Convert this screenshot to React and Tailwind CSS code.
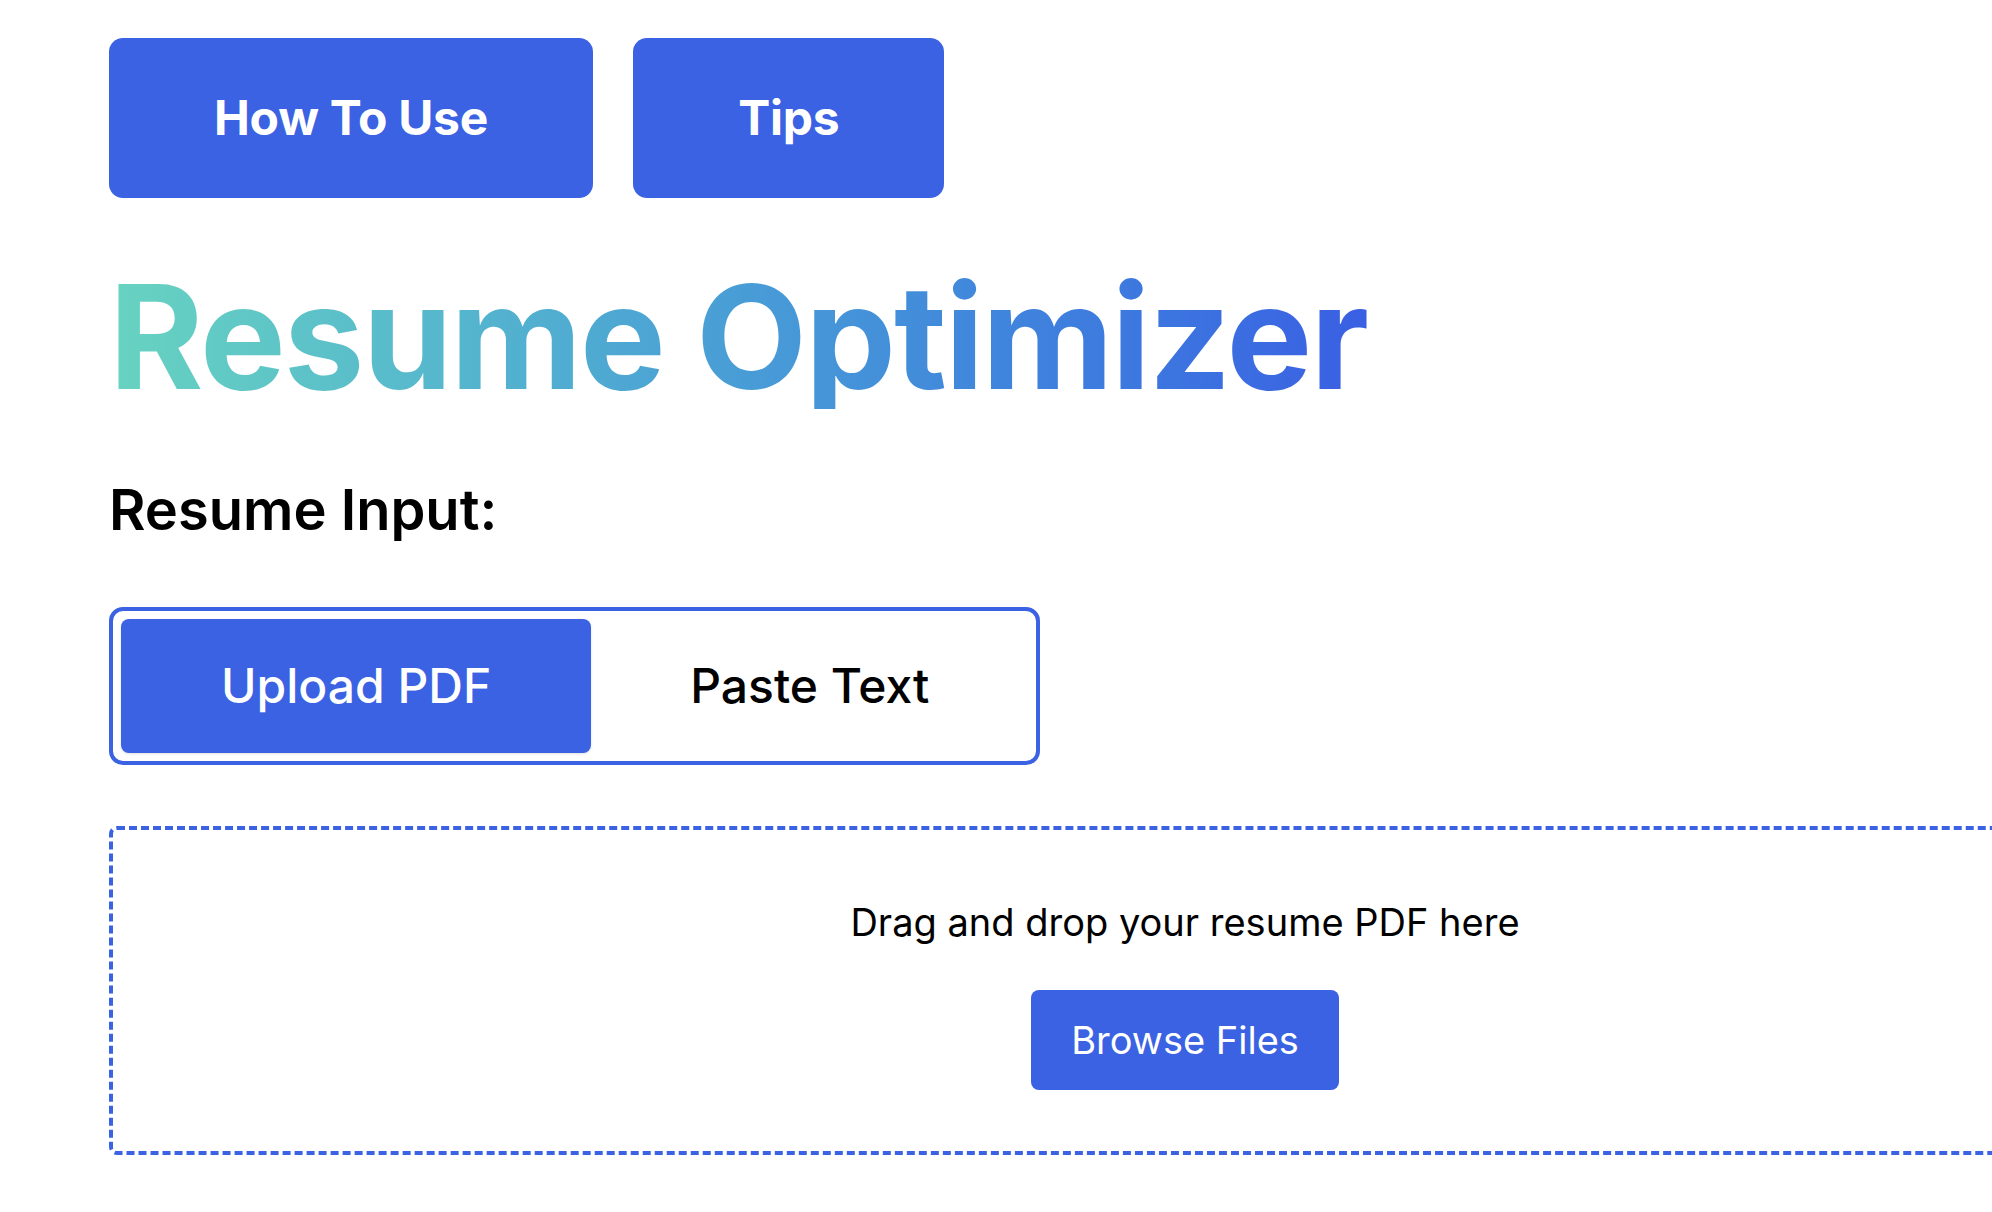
import React, { useState } from "react";

const App = () => {
  const [mode, setMode] = useState("pdf");

  return (
    <div className="min-h-screen w-full overflow-hidden bg-white text-black font-[Inter,sans-serif]">
      <div className="pl-[109px] pt-[38px]">
        {/* Top buttons */}
        <div className="flex gap-[40px]">
          <button className="h-[160px] px-[105px] rounded-[14px] bg-[#3a62e3] text-white text-[48px] font-bold leading-none tracking-[-0.005em]">
            How To Use
          </button>
          <button className="h-[160px] px-[105px] rounded-[14px] bg-[#3a62e3] text-white text-[48px] font-bold leading-none tracking-[-0.005em]">
            Tips
          </button>
        </div>

        {/* Title */}
        <h1 className="mt-[67px] text-[144px] font-bold leading-none tracking-[-0.013em]">
          <span className="inline-block bg-gradient-to-r from-[#68d3c0] to-[#3a5fe3] bg-clip-text text-transparent">
            Resume Optimizer
          </span>
        </h1>

        <h2 className="mt-[73px] text-[56px] font-semibold leading-none">Resume Input:</h2>

        {/* Mode toggle */}
        <div className="mt-[69px] inline-flex rounded-[14px] border-4 border-[#3a62e3] p-[8px]">
          <button
            onClick={() => setMode("pdf")}
            className={
              mode === "pdf"
                ? "h-[134px] px-[100px] rounded-[8px] bg-[#3a62e3] text-white text-[48px] font-medium leading-none shadow-sm"
                : "h-[134px] px-[100px] rounded-[8px] text-black text-[48px] font-medium leading-none"
            }
          >
            Upload PDF
          </button>
          <button
            onClick={() => setMode("text")}
            className={
              mode === "text"
                ? "h-[134px] px-[99px] rounded-[8px] bg-[#3a62e3] text-white text-[48px] font-medium leading-none shadow-sm"
                : "h-[134px] px-[99px] rounded-[8px] text-black text-[48px] font-medium leading-none"
            }
          >
            Paste Text
          </button>
        </div>

        {/* Drop zone */}
        <div className="mt-[61px] w-[2152px] rounded-[8px] border-4 border-dashed border-[#3a62e3] pt-[64px] pb-[61px] flex flex-col items-center">
          <p className="text-[38px] leading-[1.5]">Drag and drop your resume PDF here</p>
          <button className="mt-[39px] h-[100px] px-[40px] rounded-[8px] bg-[#3a62e3] text-white text-[38px] leading-none">
            Browse Files
          </button>
        </div>
      </div>
    </div>
  );
};

export default App;
